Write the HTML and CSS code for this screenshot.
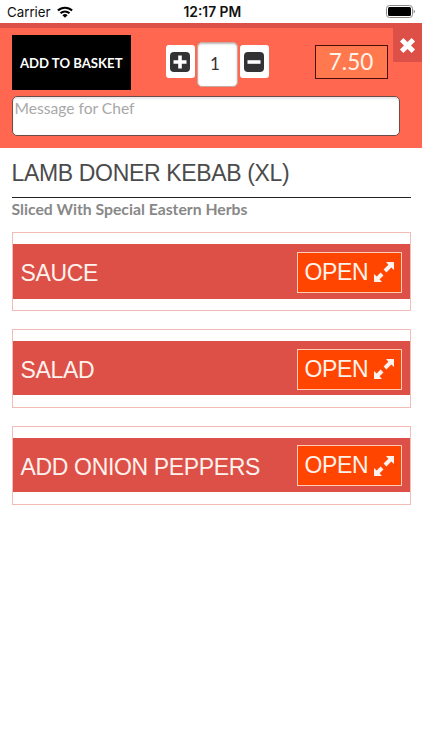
FILE: index.html
```html
<!DOCTYPE html>
<html lang="en">
<head>
<meta charset="utf-8">
<meta name="viewport" content="width=device-width">
<title>Lamb Doner Kebab (XL)</title>
<link rel="stylesheet" href="styles.css">
</head>
<body>
<svg class="defs" width="0" height="0"><symbol id="expand" viewBox="0 0 20 20"><path d="M12 0H20V8L17.3 5.6 12.4 10.4 9.6 7.6 14.4 2.7ZM0 12 2.7 14.4 6.6 10.5 9.5 13.4 5.6 17.3 8 20H0Z"/></symbol></svg>
<div class="status">
  <span class="carrier">Carrier</span>
  <svg class="wifi" viewBox="0 0 16 12"><g fill="none" stroke="#000" stroke-width="2.1"><path d="M.9 4.6a10.2 10.2 0 0 1 14.2 0"/><path d="M3.5 7.3a6.4 6.4 0 0 1 9 0"/></g><path d="M8 11.8 5.4 9.2a3.8 3.8 0 0 1 5.2 0Z"/></svg>
  <span class="time">12:17 PM</span>
  <svg class="battery" viewBox="0 0 29 13"><rect x=".5" y=".5" width="26" height="12" rx="3" fill="#fff" stroke="#888"/><rect x="2" y="2" width="23" height="9" rx="1.5"/><path d="M27.7 4.5q1.3.8 1.3 2t-1.3 2Z" fill="#888"/></svg>
</div>
<header class="order">
  <div class="controls">
    <button class="basket">ADD TO BASKET</button>
    <button class="step"><svg viewBox="0 0 20 20"><rect width="20" height="20" rx="4"/><path d="M10 3.5V16.5M3.5 10H16.5"/></svg></button>
    <div class="qty">1</div>
    <button class="step"><svg viewBox="0 0 20 20"><rect width="20" height="20" rx="4"/><path d="M3.5 10H16.5"/></svg></button>
    <div class="price">7.50</div>
    <button class="close"><svg viewBox="0 0 16 16"><path d="M2.5 2.5 13.5 13.5M13.5 2.5 2.5 13.5"/></svg></button>
  </div>
  <div class="message">Message for Chef</div>
</header>
<main>
  <h1>LAMB DONER KEBAB (XL)</h1>
  <p class="desc">Sliced With Special Eastern Herbs</p>
  <section class="panel"><div class="bar"><h2>SAUCE</h2><button class="open"><span>OPEN</span><svg><use href="#expand"/></svg></button></div></section>
  <section class="panel"><div class="bar"><h2>SALAD</h2><button class="open"><span>OPEN</span><svg><use href="#expand"/></svg></button></div></section>
  <section class="panel"><div class="bar"><h2>ADD ONION PEPPERS</h2><button class="open"><span>OPEN</span><svg><use href="#expand"/></svg></button></div></section>
</main>
</body>
</html>
```
FILE: styles.css
```css
* { box-sizing: border-box; }
body { margin: 0; background: #fff; font-family: Lato, sans-serif; height: 750px; overflow: hidden; }
button { padding: 0; border: 0; font: inherit; }
.defs { position: absolute; }
.status { height: 23px; display: flex; align-items: center; padding: 0 7px; font: 13.3px/23px Inter, sans-serif; color: #111; }
.carrier { width: 50px; padding-top: 1px; }
.wifi { width: 16px; height: 12px; }
.time { margin-left: 110.5px; padding-top: 1px; width: 60px; font-weight: 600; white-space: nowrap; font-size: 13.8px; }
.battery { margin-left: auto; width: 29px; height: 13px; }
.order { height: 125px; background: #ff6750; border-top: 5px solid #dd5047; padding-left: 11.5px; }
.controls { display: flex; align-items: flex-start; height: 68px; }
.basket { width: 119.5px; height: 55px; margin-top: 7px; background: #000; color: #fff; font-size: 13.15px; font-weight: 700; white-space: nowrap; }
.step { width: 29px; height: 33px; margin: 17px 0 0 34.5px; background: #fff; border-radius: 3px; display: flex; align-items: center; justify-content: center; }
.step svg { width: 20px; height: 20px; fill: #333335; }
.step path { stroke: #fff; stroke-width: 3.6; }
.qty { width: 41px; height: 45px; margin: 14px 0 0 2px; border: 1.5px solid #c9aaa3; border-radius: 5px; background: #fff; box-shadow: inset 0 1px 2px #bbb; color: #333; font-size: 17px; line-height: 41px; text-align: center; padding-right: 4px; }
.qty + .step { margin-left: 2px; }
.price { width: 73px; height: 34px; margin: 17px 0 0 46px; border: 1px solid #4a1008; background: #ff784e; color: #fff4e9; font-size: 22.5px; line-height: 32px; text-align: center; }
.close { width: 29px; height: 34px; margin-left: auto; background: #dd5047; display: flex; align-items: center; justify-content: center; }
.close svg { width: 17px; height: 17px; }
.close path { stroke: #fff; stroke-width: 4.6; }
.message { width: 388px; height: 40px; border: 1px solid #6e4c46; border-radius: 5px; background: #fff; box-shadow: inset 0 2px 2px #e7e7ec; color: #a8a8a8; font-size: 15.6px; line-height: 22px; padding-left: 2px; }
main { padding: 0 11.5px; }
h1, h2, .open { font-family: "Liberation Sans", Arial, sans-serif; font-weight: 400; font-size: 23px; letter-spacing: -0.34px; }
h1 { margin: 0; height: 50px; border-bottom: 1px solid #222; color: #4b4b4b; line-height: 50px; white-space: nowrap; }
.desc { margin: 0 0 11px; height: 23px; color: #888; font-size: 15.75px; font-weight: 700; line-height: 22px; }
.panel { height: 79px; margin-bottom: 17.8px; border: 1px solid #f4bcb7; padding-top: 11px; }
.bar { height: 54.5px; background: #dd5047; display: flex; align-items: center; justify-content: space-between; padding: 2px 8px 0; }
h2 { margin: 3px 0 0; color: #fff2ed; white-space: nowrap; }
.open { width: 105px; height: 41px; border: 1px solid #ffcdb5; background: #ff4500; color: #fff2ed; display: flex; align-items: center; padding-left: 7px; }
.open span { width: 69px; text-align: left; }
.open svg { width: 20px; height: 20px; fill: #fff2ed; }
```
